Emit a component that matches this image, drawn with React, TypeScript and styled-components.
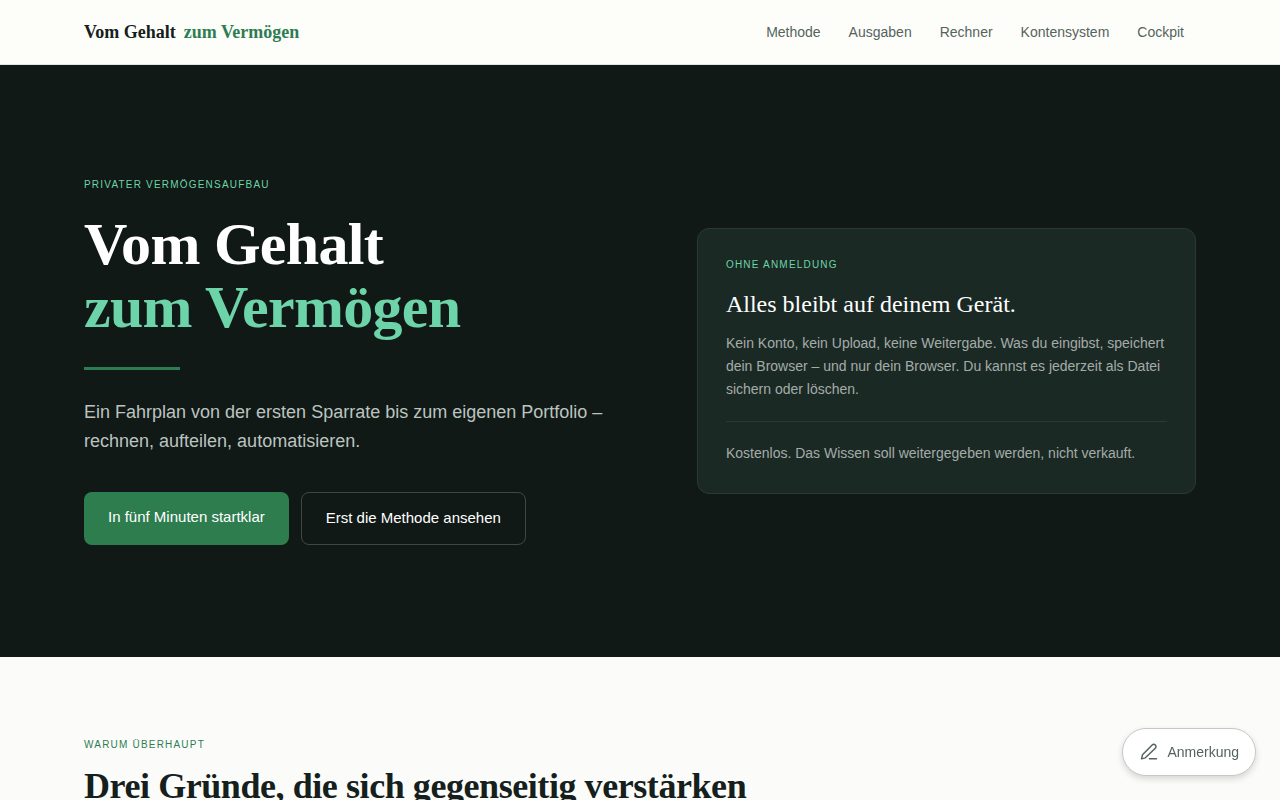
import React from 'react';
import styled, { createGlobalStyle } from 'styled-components';

const sans = `"Liberation Sans", Arial, sans-serif`;
const serif = `"Liberation Serif", "Times New Roman", serif`;

const GlobalStyle = createGlobalStyle`
  *, *::before, *::after { box-sizing: border-box; }
  body {
    margin: 0;
    background: #fbfcfa;
    color: #15201c;
    font-family: ${sans};
    font-size: 16px;
  }
  h1, h2, p { margin: 0; }
  a { color: inherit; text-decoration: none; }
`;

const Container = styled.div`
  width: 100%;
  max-width: 1160px;
  margin: 0 auto;
  padding: 0 24px;
`;

const Header = styled.header`
  background: #fdfefa;
  border-bottom: 1px solid #e0e5e0;
`;

const HeaderRow = styled(Container)`
  display: flex;
  align-items: center;
  justify-content: space-between;
  min-height: 64px;
`;

const Brand = styled.a`
  display: flex;
  gap: 8px;
  font-family: ${serif};
  font-size: 18px;
  font-weight: 700;
  line-height: 24px;
`;

const BrandAccent = styled.span`
  color: #2e7d52;
`;

const Nav = styled.nav`
  display: flex;
  gap: 4px;
`;

const NavLink = styled.a`
  padding: 8px 12px;
  color: #56635d;
  font-size: 14px;
  line-height: 22px;
`;

const Hero = styled.section`
  background: #101916;
  padding: 112px 0;
`;

const HeroGrid = styled(Container)`
  display: grid;
  grid-template-columns: 11fr 10fr;
  gap: 64px;
  align-items: center;
`;

const Eyebrow = styled.p<{ $light?: boolean }>`
  color: ${({ $light }) => ($light ? '#6dd3a8' : '#2e7d52')};
  font-size: 10px;
  line-height: 15px;
  letter-spacing: 0.12em;
  text-transform: uppercase;
`;

const HeroTitle = styled.h1`
  margin-top: 21px;
  color: #fff;
  font-family: ${serif};
  font-size: 60px;
  font-weight: 700;
  line-height: 63px;
  letter-spacing: -0.012em;
`;

const TitleAccent = styled.span`
  display: block;
  color: #6dd3a8;
`;

const Rule = styled.div`
  width: 96px;
  height: 3px;
  margin: 28px 0;
  background: #2e7d52;
`;

const Lead = styled.p`
  color: #bcc4c0;
  font-size: 18px;
  line-height: 29px;
`;

const Actions = styled.div`
  display: flex;
  flex-wrap: wrap;
  gap: 12px;
  margin-top: 36px;
`;

const Action = styled.a<{ $outline?: boolean }>`
  padding: 13px 24px 15px;
  border: ${({ $outline }) => ($outline ? '1px solid #404845' : '0')};
  border-radius: 8px;
  background: ${({ $outline }) => ($outline ? 'transparent' : '#2e7d4f')};
  color: #fff;
  font-size: 15px;
  line-height: 23px;
`;

const Card = styled.aside`
  padding: 28px;
  border: 1px solid #2b3934;
  border-radius: 12px;
  background: #1b2925;
`;

const CardTitle = styled.p`
  margin: 18px 0 13px;
  color: #fff;
  font-family: ${serif};
  font-size: 24px;
  line-height: 29px;
`;

const CardText = styled.p`
  color: #a4aca8;
  font-size: 14px;
  line-height: 23px;
`;

const CardNote = styled(CardText)`
  margin-top: 20px;
  padding-top: 20px;
  border-top: 1px solid #2b3934;
`;

const Reasons = styled.section`
  padding: 80px 0;
`;

const SectionTitle = styled.h2`
  margin-top: 13px;
  font-family: ${serif};
  font-size: 36px;
  font-weight: 700;
  line-height: 42px;
  letter-spacing: -0.012em;
`;

const NoteButton = styled.button`
  position: fixed;
  right: 24px;
  bottom: 24px;
  display: flex;
  align-items: center;
  gap: 8px;
  height: 48px;
  padding: 0 16px;
  border: 1px solid #c5cac6;
  border-radius: 24px;
  background: #fff;
  box-shadow: 0 3px 6px rgba(16, 25, 22, 0.16);
  color: #56635d;
  font-family: inherit;
  font-size: 14px;
  cursor: pointer;
`;

const links = ['Methode', 'Ausgaben', 'Rechner', 'Kontensystem', 'Cockpit'];

const PenIcon = () => (
  <svg width="20" height="20" viewBox="0 0 24 24" fill="none" stroke="currentColor" strokeWidth="1.75" strokeLinecap="round" strokeLinejoin="round" aria-hidden="true">
    <path d="M12.5 20.2h8.5" />
    <path d="M15.8 3.6a2.5 2.5 0 0 1 3.8 3.8L7.6 19 3 20.2l1.2-4.8Z" />
  </svg>
);

export default function App() {
  return (
    <>
      <GlobalStyle />
      <Header>
        <HeaderRow>
          <Brand href="#start">
            <span>Vom Gehalt</span>
            <BrandAccent>zum Vermögen</BrandAccent>
          </Brand>
          <Nav aria-label="Hauptnavigation">
            {links.map((label) => (
              <NavLink key={label} href={`#${label.toLowerCase()}`}>
                {label}
              </NavLink>
            ))}
          </Nav>
        </HeaderRow>
      </Header>
      <main>
        <Hero id="start">
          <HeroGrid>
            <div>
              <Eyebrow $light>Privater Vermögensaufbau</Eyebrow>
              <HeroTitle>
                Vom Gehalt <TitleAccent>zum Vermögen</TitleAccent>
              </HeroTitle>
              <Rule />
              <Lead>
                Ein Fahrplan von der ersten Sparrate bis zum eigenen Portfolio – rechnen, aufteilen,
                automatisieren.
              </Lead>
              <Actions>
                <Action href="#cockpit">In fünf Minuten startklar</Action>
                <Action href="#methode" $outline>
                  Erst die Methode ansehen
                </Action>
              </Actions>
            </div>
            <Card>
              <Eyebrow $light>Ohne Anmeldung</Eyebrow>
              <CardTitle>Alles bleibt auf deinem Gerät.</CardTitle>
              <CardText>
                Kein Konto, kein Upload, keine Weitergabe. Was du eingibst, speichert dein Browser –
                und nur dein Browser. Du kannst es jederzeit als Datei sichern oder löschen.
              </CardText>
              <CardNote>Kostenlos. Das Wissen soll weitergegeben werden, nicht verkauft.</CardNote>
            </Card>
          </HeroGrid>
        </Hero>
        <Reasons id="methode">
          <Container>
            <Eyebrow>Warum überhaupt</Eyebrow>
            <SectionTitle>Drei Gründe, die sich gegenseitig verstärken</SectionTitle>
          </Container>
        </Reasons>
      </main>
      <NoteButton type="button">
        <PenIcon />
        Anmerkung
      </NoteButton>
    </>
  );
}
